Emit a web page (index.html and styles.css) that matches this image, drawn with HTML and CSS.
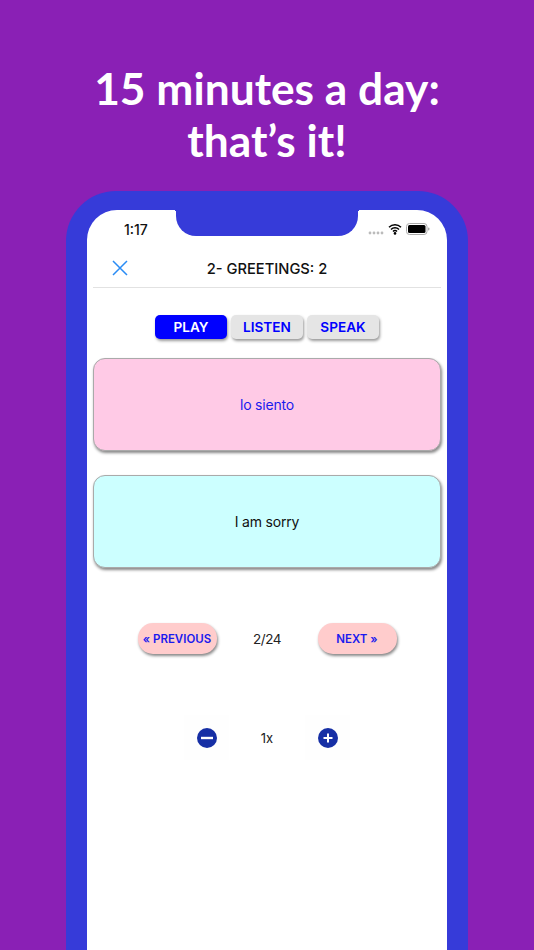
FILE: index.html
```html
<!DOCTYPE html>
<html lang="en">
<head>
<meta charset="UTF-8">
<meta name="viewport" content="width=device-width, initial-scale=1.0">
<title>15 minutes a day</title>
<link rel="stylesheet" href="styles.css">
</head>
<body>
<h1 class="headline">15 minutes a day:<br>that’s it!</h1>

<div class="phone">
  <div class="screen">
    <div class="notch"></div>
    <div class="status">
      <span class="time">1:17</span>
      <div class="status-icons">
        <svg class="signal" width="16" height="4" viewBox="0 0 16 4"><circle cx="2" cy="2" r="1.4"/><circle cx="6" cy="2" r="1.4"/><circle cx="10" cy="2" r="1.4"/><circle cx="14" cy="2" r="1.4"/></svg>
        <svg class="wifi" width="14" height="12" viewBox="0 0 14 12"><path d="M1 4.2a8.6 8.6 0 0 1 12 0M3 6.4a5.6 5.6 0 0 1 8 0M5 8.4a2.8 2.8 0 0 1 4 0" fill="none" stroke="#000" stroke-width="1.5"/><circle cx="7" cy="10.4" r="1.3"/></svg>
        <svg class="battery" width="24" height="12" viewBox="0 0 24 12"><rect x="0.5" y="0.5" width="20.5" height="11" rx="3" fill="none" stroke="#aaa"/><rect x="2" y="2" width="17.5" height="8" rx="1.5"/><rect x="22" y="4.5" width="1.4" height="3" rx="0.7" fill="#aaa"/></svg>
      </div>
    </div>

    <div class="navbar">
      <svg class="close" width="16" height="16" viewBox="0 0 16 16"><path d="M1 1l14 14M15 1L1 15" stroke="#2a8cf5" stroke-width="1.5" fill="none"/></svg>
      <span class="title">2- GREETINGS: 2</span>
    </div>

    <div class="tabs">
      <a class="tab active">PLAY</a>
      <a class="tab">LISTEN</a>
      <a class="tab">SPEAK</a>
    </div>

    <div class="card card-pink">lo siento</div>
    <div class="card card-blue">I am sorry</div>

    <div class="pager">
      <a class="pill">« PREVIOUS</a>
      <span class="count">2/24</span>
      <a class="pill">NEXT »</a>
    </div>

    <div class="speed">
      <div class="speed-btn">
        <svg width="20" height="20" viewBox="0 0 20 20"><circle cx="10" cy="10" r="10" fill="#162fa5"/><path d="M4 10h12" stroke="#fff" stroke-width="2.4"/></svg>
      </div>
      <span class="rate">1x</span>
      <div class="speed-btn">
        <svg width="20" height="20" viewBox="0 0 20 20"><circle cx="10" cy="10" r="10" fill="#162fa5"/><path d="M5.5 10h9M10 5.5v9" stroke="#fff" stroke-width="2"/></svg>
      </div>
    </div>
  </div>
</div>
</body>
</html>
```

FILE: styles.css
```css
html, body {
  margin: 0;
  height: 950px;
  overflow: hidden;
}
body {
  background: #8a20b5;
  font-family: Inter, "Liberation Sans", sans-serif;
  display: flex;
  flex-direction: column;
  align-items: center;
}
.headline {
  margin: 62px 0 0;
  height: 129px;
  color: #fff;
  font-family: Lato, sans-serif;
  font-size: 44.3px;
  font-weight: 700;
  line-height: 52px;
  text-align: center;
}

/* Marco del telefono */
.phone {
  width: 402px;
  height: 759px;
  box-sizing: border-box;
  padding: 19px 21px 0;
  background: #363bd9;
  border-radius: 50px 50px 0 0;
}
.screen {
  position: relative;
  height: 100%;
  background: #fff;
  border-radius: 30px 30px 0 0;
  display: flex;
  flex-direction: column;
  align-items: center;
}
.notch {
  position: absolute;
  top: 0;
  left: 89px;
  width: 182px;
  height: 26px;
  background: #363bd9;
  border-radius: 0 0 20px 20px;
}
/* Esquinas curvas de la muesca */
.notch::before, .notch::after {
  content: "";
  position: absolute;
  top: 0;
  width: 3px;
  height: 3px;
}
.notch::before {
  left: -3px;
  background: radial-gradient(circle at 0 100%, #fff 3px, #363bd9 3px);
}
.notch::after {
  right: -3px;
  background: radial-gradient(circle at 100% 100%, #fff 3px, #363bd9 3px);
}

.status {
  width: 100%;
  height: 38px;
  box-sizing: border-box;
  padding: 0 17px 0 37px;
  display: flex;
  justify-content: space-between;
  align-items: center;
}
.time {
  font-size: 14px;
  font-weight: 500;
  color: #111;
}
.status-icons {
  display: flex;
  align-items: center;
  gap: 4px;
}
.signal {
  fill: #bbb;
  margin-top: 8px;
}

.navbar {
  position: relative;
  width: 348px;
  height: 39px;
  border-bottom: 1px solid #e2e2e2;
  display: flex;
  justify-content: center;
  align-items: center;
}
.close {
  position: absolute;
  left: 19px;
  top: 12px;
}
.title {
  margin-top: 2px;
  font-size: 14.7px;
  font-weight: 500;
  color: #111;
}

.tabs {
  display: flex;
  gap: 4px;
  margin-top: 27px;
}
.tab {
  width: 72px;
  height: 24px;
  line-height: 24px;
  text-align: center;
  border-radius: 5px;
  background: #e5e5e5;
  color: #0000ff;
  font-size: 13.6px;
  font-weight: 600;
  box-shadow: 1px 2px 3px #999;
}
.tab.active {
  background: #0000ff;
  color: #fff;
}

.card {
  width: 348px;
  height: 93px;
  box-sizing: border-box;
  border: 1px solid #aaa;
  border-radius: 12px;
  display: flex;
  justify-content: center;
  align-items: center;
  font-size: 14px;
  letter-spacing: -0.2px;
  box-shadow: 1px 2px 3px #888;
}
.card-pink {
  margin-top: 19px;
  background: #ffcae6;
  color: #1a1aee;
}
.card-blue {
  margin-top: 24px;
  background: #ccffff;
  color: #111;
}

.pager {
  width: 259px;
  margin-top: 55px;
  display: flex;
  justify-content: space-between;
  align-items: center;
}
.pill {
  width: 79px;
  height: 31px;
  line-height: 32px;
  text-align: center;
  white-space: nowrap;
  border-radius: 15px;
  background: #ffcccc;
  color: #1a1aee;
  font-size: 11.5px;
  font-weight: 600;
  box-shadow: 1px 2px 3px #888;
}
.count {
  font-size: 13.5px;
  letter-spacing: -0.4px;
  color: #222;
}

.speed {
  margin-top: 61px;
  display: flex;
  align-items: center;
  gap: 31px;
}
.speed-btn {
  width: 45px;
  height: 45px;
  background: #fefefe;
  display: flex;
  justify-content: center;
  align-items: center;
}
.rate {
  width: 14px;
  text-align: center;
  font-size: 13px;
  color: #222;
}
```
